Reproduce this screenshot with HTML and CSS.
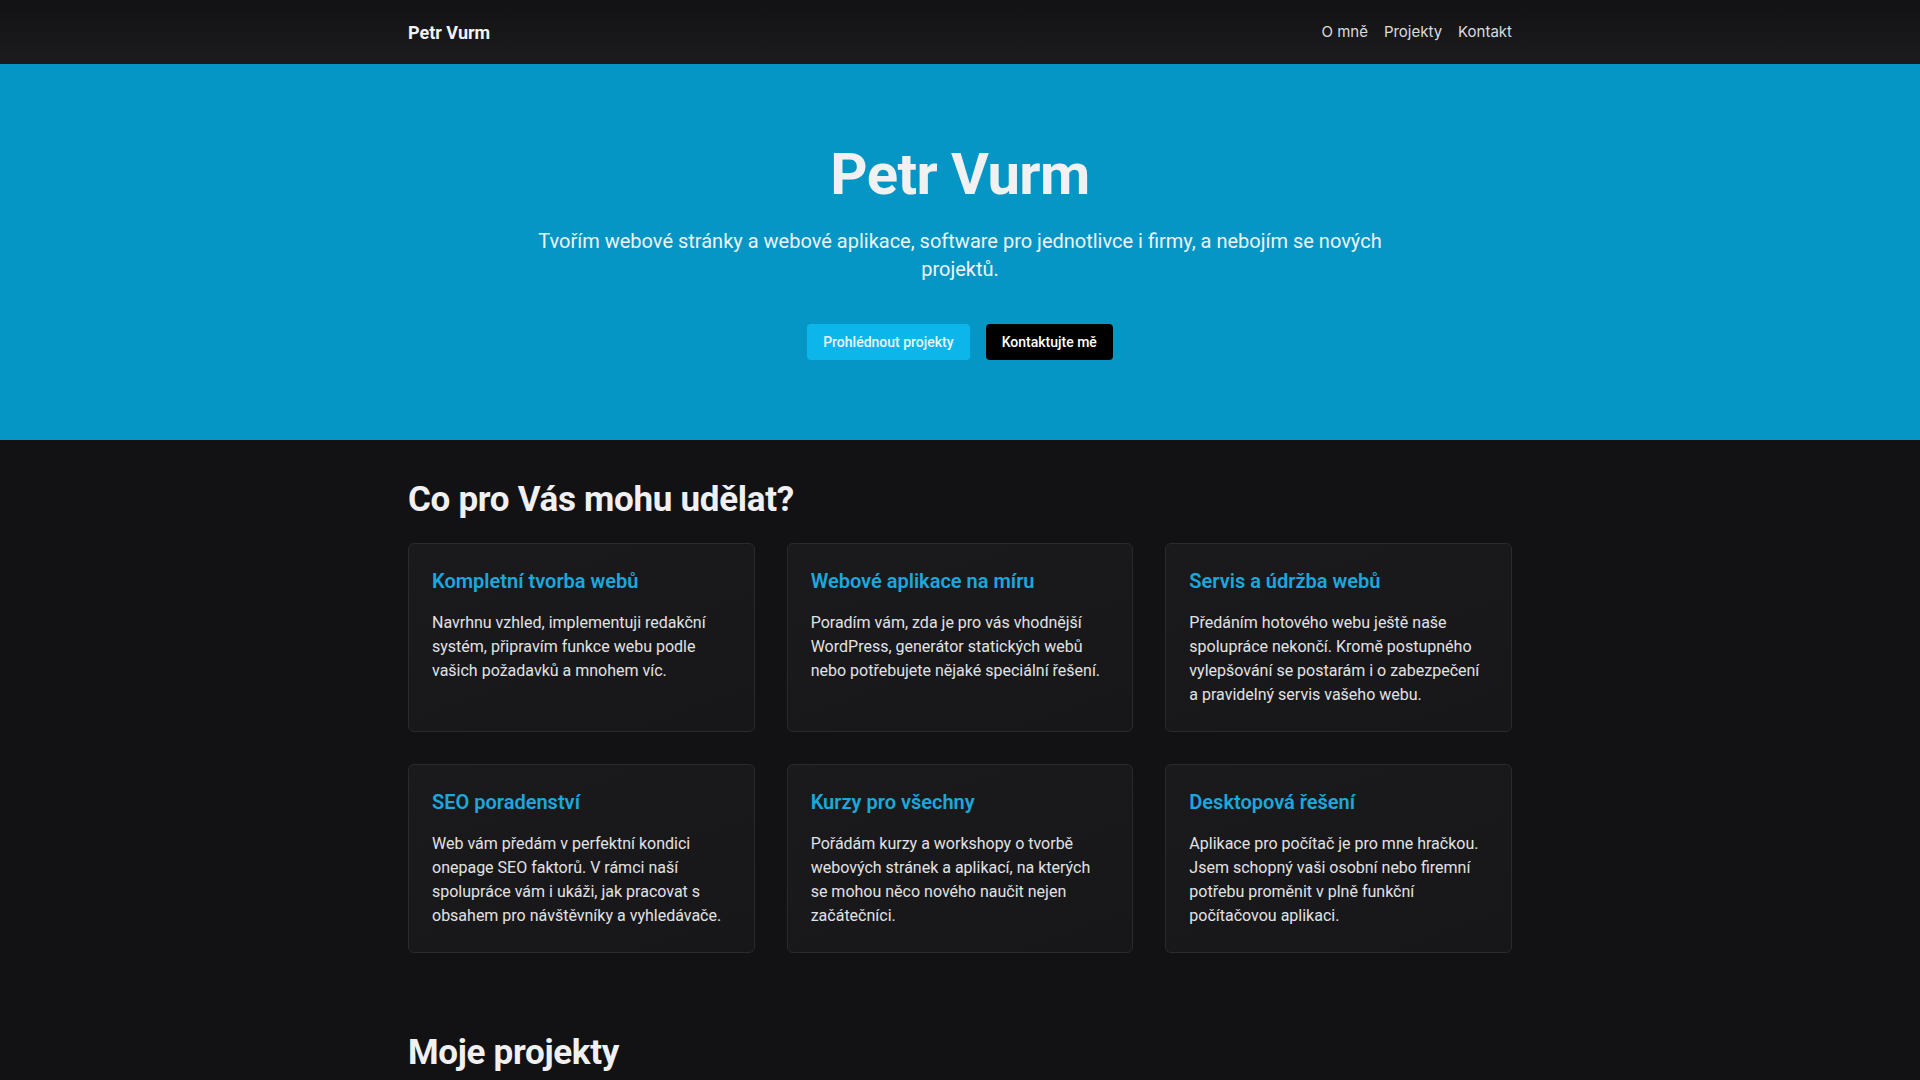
FILE: index.html
```html
<!DOCTYPE html>
<html lang="cs">
<head>
<meta charset="utf-8">
<title>Petr Vurm</title>
<link rel="stylesheet" href="styles.css">
</head>
<body>
<header class="navbar">
  <div class="container nav-inner">
    <a class="brand" href="#">Petr Vurm</a>
    <nav class="nav-links">
      <a href="#">O mně</a>
      <a href="#">Projekty</a>
      <a href="#">Kontakt</a>
    </nav>
  </div>
</header>
<section class="hero">
  <div class="container hero-inner">
    <h1 class="hero-title">Petr Vurm</h1>
    <p class="lead">Tvořím webové stránky a webové aplikace, software pro jednotlivce i firmy, a nebojím se nových projektů.</p>
    <div class="hero-buttons">
      <a class="btn btn-info" href="#">Prohlédnout projekty</a>
      <a class="btn btn-dark" href="#">Kontaktujte mě</a>
    </div>
  </div>
</section>
<main class="container">
  <section class="services">
    <h2 class="section-title">Co pro Vás mohu udělat?</h2>
    <div class="cards">
      <div class="card">
        <h3 class="card-title">Kompletní tvorba webů</h3>
        <p class="card-text">Navrhnu vzhled, implementuji redakční systém, připravím funkce webu podle vašich požadavků a mnohem víc.</p>
      </div>
      <div class="card">
        <h3 class="card-title">Webové aplikace na míru</h3>
        <p class="card-text">Poradím vám, zda je pro vás vhodnější WordPress, generátor statických webů nebo potřebujete nějaké speciální řešení.</p>
      </div>
      <div class="card">
        <h3 class="card-title">Servis a údržba webů</h3>
        <p class="card-text">Předáním hotového webu ještě naše spolupráce nekončí. Kromě postupného vylepšování se postarám i o zabezpečení a pravidelný servis vašeho webu.</p>
      </div>
      <div class="card">
        <h3 class="card-title">SEO poradenství</h3>
        <p class="card-text">Web vám předám v perfektní kondici onepage SEO faktorů. V rámci naší spolupráce vám i ukáži, jak pracovat s obsahem pro návštěvníky a vyhledávače.</p>
      </div>
      <div class="card">
        <h3 class="card-title">Kurzy pro všechny</h3>
        <p class="card-text">Pořádám kurzy a workshopy o tvorbě webových stránek a aplikací, na kterých se mohou něco nového naučit nejen začátečníci.</p>
      </div>
      <div class="card">
        <h3 class="card-title">Desktopová řešení</h3>
        <p class="card-text">Aplikace pro počítač je pro mne hračkou. Jsem schopný vaši osobní nebo firemní potřebu proměnit v plně funkční počítačovou aplikaci.</p>
      </div>
    </div>
  </section>
  <section class="projects">
    <h2 class="section-title">Moje projekty</h2>
  </section>
</main>
</body>
</html>
```

FILE: styles.css
```css
* {
  box-sizing: border-box;
}

html, body {
  margin: 0;
  padding: 0;
}

body {
  background: #121214;
  color: #e6e6e8;
  font-family: Roboto, "Noto Sans", "Liberation Sans", sans-serif;
  font-size: 16px;
  line-height: 1.5;
}

a {
  text-decoration: none;
  color: inherit;
}

.container {
  width: 1104px;
  margin: 0 auto;
}

/* navbar */
.navbar {
  height: 64px;
  background: linear-gradient(180deg, #121214 0%, #1c1c1f 100%);
}

.nav-inner {
  height: 100%;
  display: flex;
  align-items: center;
  justify-content: space-between;
}

.brand {
  font-size: 18px;
  font-weight: 700;
  color: #f2f2f2;
}

.nav-links {
  display: flex;
  gap: 16px;
  font-family: Inter, Roboto, sans-serif;
  font-size: 15px;
}

.nav-links a {
  color: #dcdcde;
}

/* hero */
.hero {
  background: #0596c6;
  padding: 74px 0 80px;
}

.hero-inner {
  display: flex;
  flex-direction: column;
  align-items: center;
  text-align: center;
}

.hero-title {
  margin: 0;
  font-size: 58px;
  font-weight: 700;
  line-height: 72px;
  color: #f1f1f1;
  letter-spacing: -0.6px;
}

.lead {
  margin: 17px 0 0;
  max-width: 860px;
  font-size: 20px;
  font-weight: 400;
  line-height: 28px;
  color: #eef4f7;
}

.hero-buttons {
  margin-top: 41px;
  display: flex;
  gap: 16px;
}

.btn {
  display: inline-flex;
  align-items: center;
  justify-content: center;
  height: 36px;
  padding: 0 16px;
  border-radius: 4px;
  font-size: 14px;
  font-weight: 500;
}

.btn-info {
  background: #0cb6ea;
  color: #eaf6fb;
}

.btn-dark {
  background: #000000;
  color: #ffffff;
}

/* services */
.services {
  padding-top: 39px;
}

.section-title {
  margin: 0 0 22px;
  font-size: 35px;
  font-weight: 700;
  line-height: 42px;
  color: #f0f0f2;
  letter-spacing: -0.3px;
}

.cards {
  display: grid;
  grid-template-columns: repeat(3, 1fr);
  gap: 32px;
}

.card {
  background: linear-gradient(160deg, #1a1a1d 0%, #17171a 100%);
  border: 1px solid #2a2a2e;
  border-radius: 6px;
  padding: 25px 23px 24px;
}

.card-title {
  margin: 0 0 18px;
  font-size: 20px;
  font-weight: 600;
  line-height: 24px;
  color: #1ba8dc;
}

.card-text {
  margin: 0;
  font-size: 16px;
  line-height: 24px;
  color: #e2e2e4;
}

/* projects */
.projects {
  padding-top: 79px;
}
```
